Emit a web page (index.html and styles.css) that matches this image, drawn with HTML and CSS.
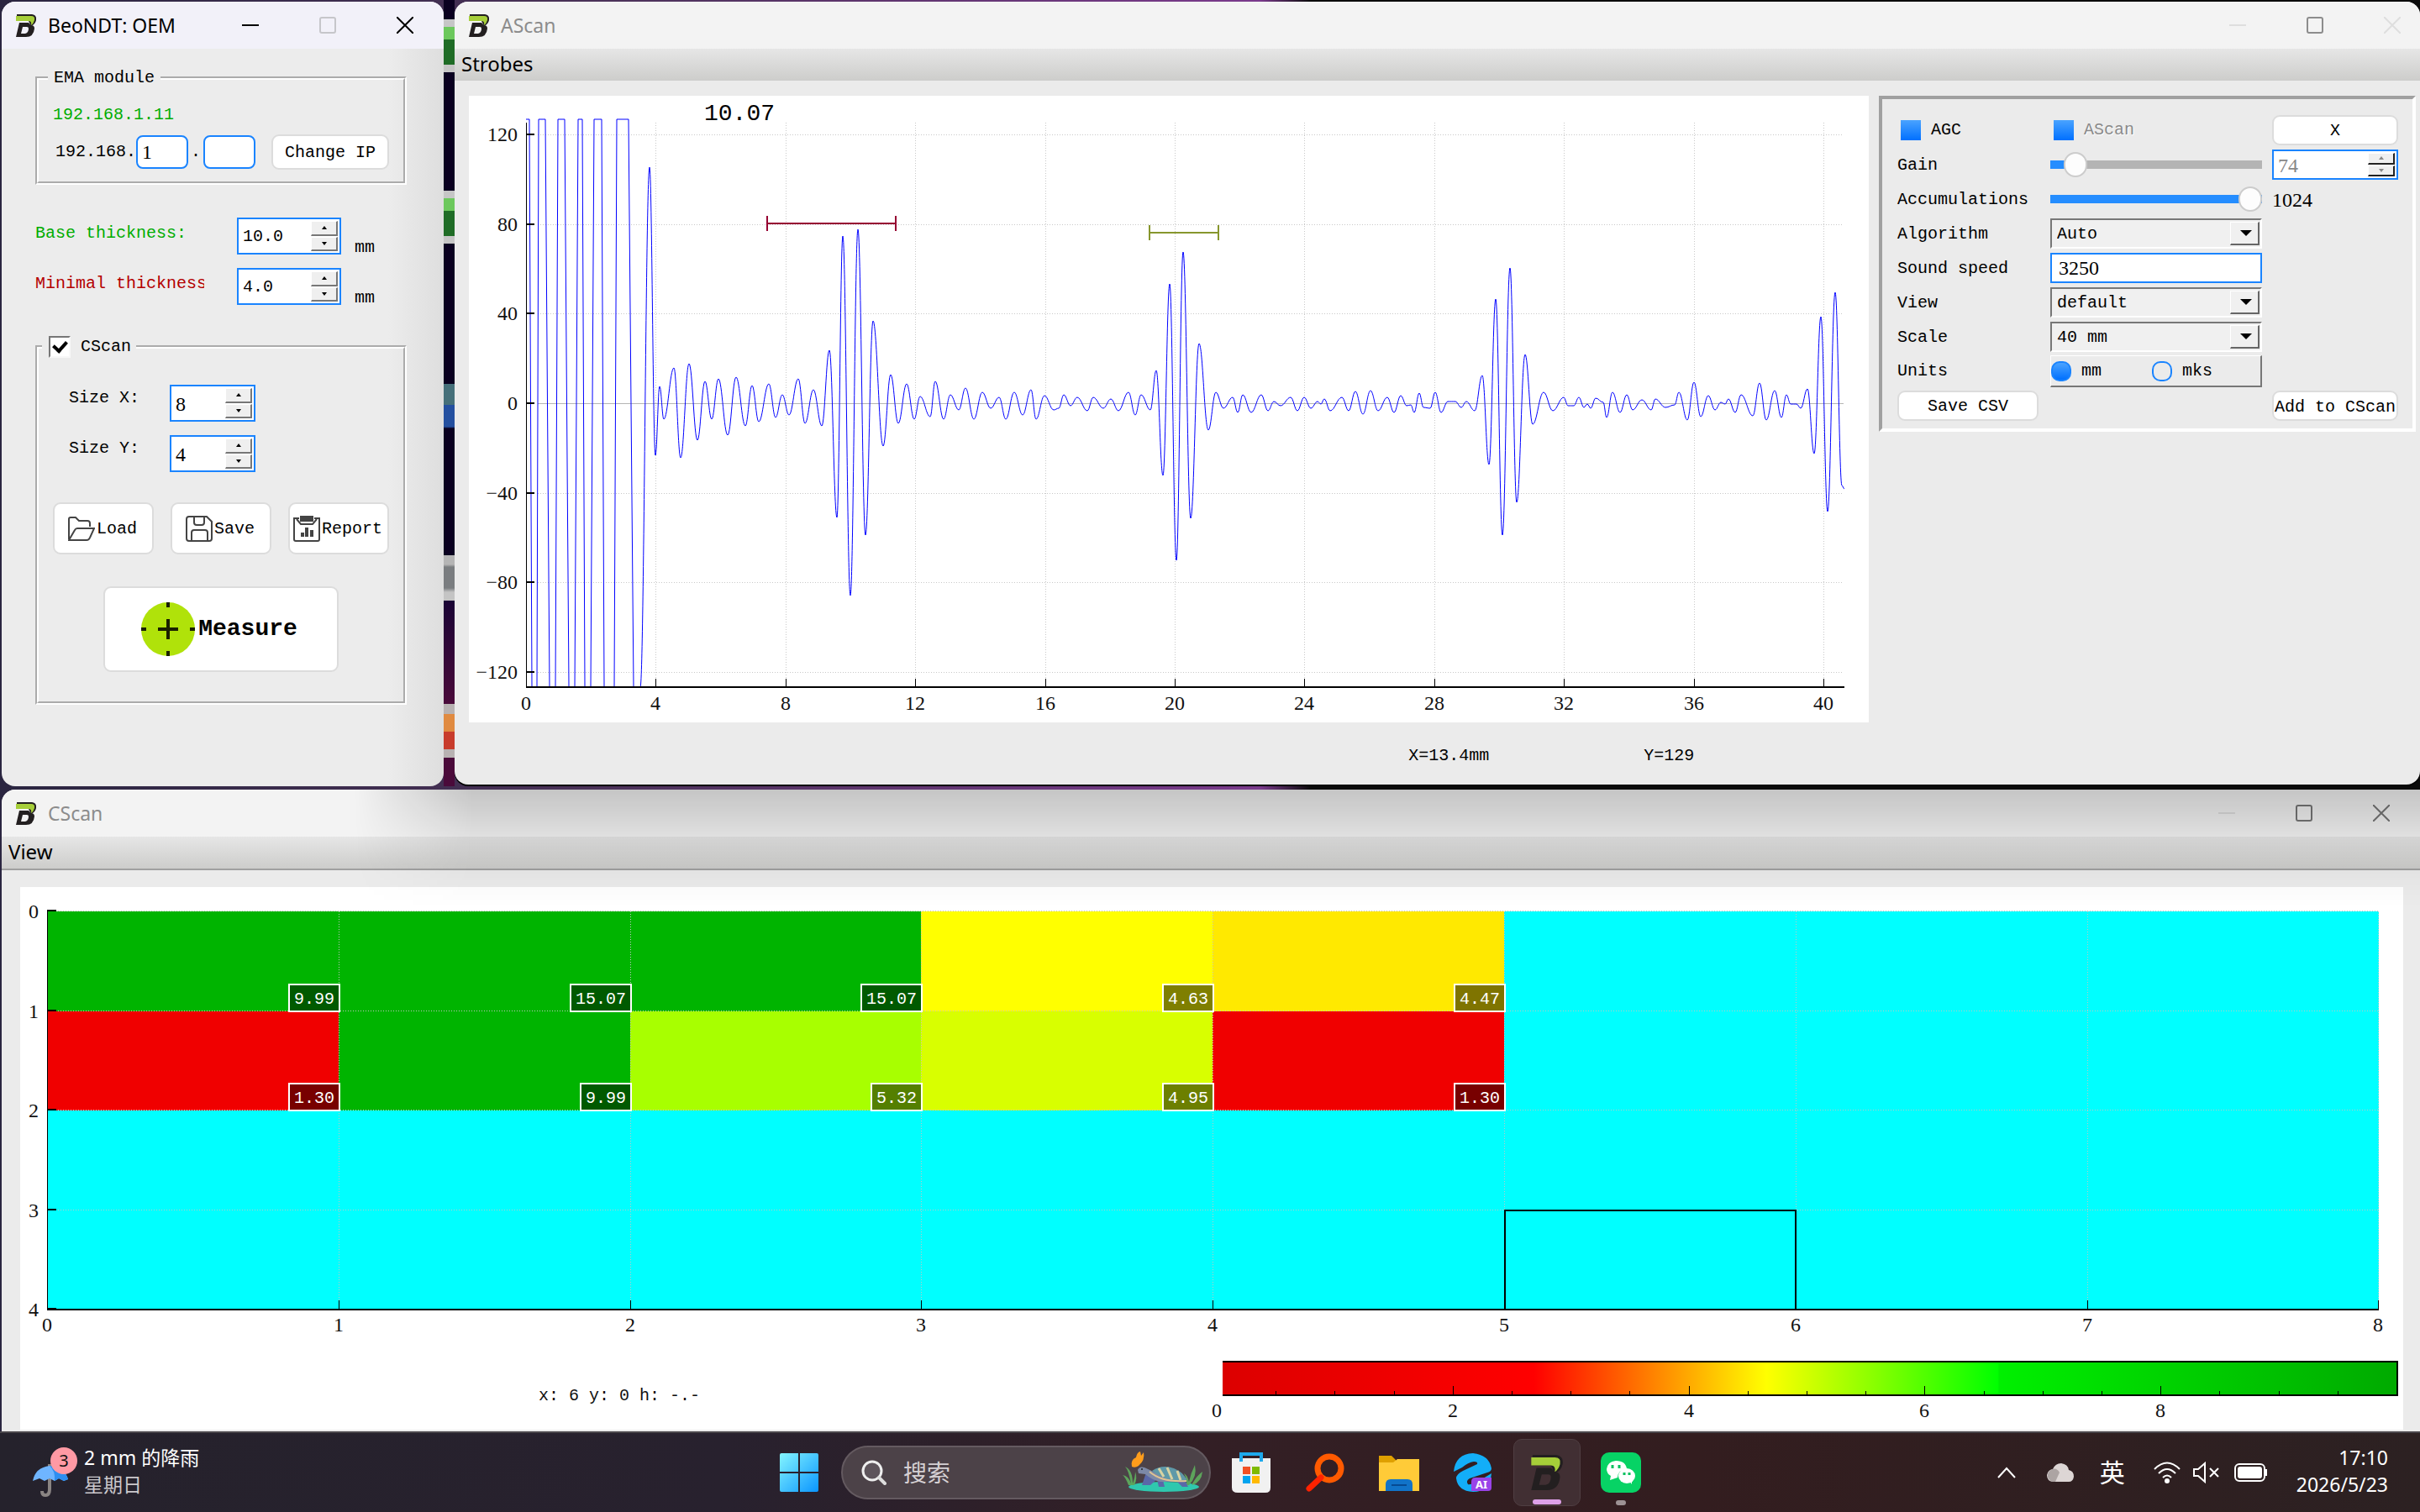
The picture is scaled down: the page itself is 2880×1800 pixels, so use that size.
FILE: index.html
```html
<!DOCTYPE html>
<html lang="zh-CN">
<head>
<meta charset="utf-8">
<title>BeoNDT: OEM</title>
<link rel="stylesheet" href="styles.css">
</head>
<body>
<svg class="defs" aria-hidden="true">
  <symbol id="logo" viewBox="0 0 24 27">
    <path d="M1 0H19Q25 1 24 7Q23 12 18 14L15 8H1Z" fill="#231f20"/>
    <path d="M0 2H18Q23 2 22 7Q21 11 18 13Q19 8 15 8H0Z" fill="#a6ce39"/>
    <path fill-rule="evenodd" d="M4 10H15L18 13Q22 13 22 17Q21 27 12 27H0ZM8 15L6 23H11Q15 22 15 17Q15 15 13 15Z" fill="#231f20"/>
  </symbol>
  <symbol id="min" viewBox="0 0 20 20"><path d="M0 10H20" stroke="currentColor" stroke-width="2"/></symbol>
  <symbol id="max" viewBox="0 0 20 20"><rect x="1" y="1" width="18" height="18" rx="2" fill="none" stroke="currentColor" stroke-width="2"/></symbol>
  <symbol id="close" viewBox="0 0 20 20"><path d="M0 0L20 20M20 0L0 20" stroke="currentColor" stroke-width="2"/></symbol>
</svg>

<div class="desktop">
  <div class="top-row">
    <section class="window oem">
      <header class="titlebar active">
        <svg class="logo"><use href="#logo"/></svg>
        <h1>BeoNDT: OEM</h1>
        <div class="caption">
          <button aria-label="Minimize"><svg><use href="#min"/></svg></button>
          <button class="dim" aria-label="Maximize"><svg><use href="#max"/></svg></button>
          <button aria-label="Close"><svg><use href="#close"/></svg></button>
        </div>
      </header>
      <form class="oem-body">
        <fieldset class="group ema">
          <legend>EMA module</legend>
          <div class="ip-now">192.168.1.11</div>
          <div class="ip-row">
            <label for="ip3">192.168.</label>
            <input id="ip3" class="num" type="text" value="1">
            <label class="dot" for="ip4">.</label>
            <input id="ip4" class="num" type="text" value="">
            <button class="btn" type="button">Change IP</button>
          </div>
        </fieldset>
        <div class="thick-row">
          <label class="green" for="base">Base thickness:</label>
          <span class="spin"><input id="base" type="text" value="10.0"><span class="steps"><button type="button" aria-label="Up" class="up"></button><button type="button" aria-label="Down" class="down"></button></span></span>
          <span class="unit">mm</span>
        </div>
        <div class="thick-row">
          <label class="red" for="minimal">Minimal thickness</label>
          <span class="spin"><input id="minimal" type="text" value="4.0"><span class="steps"><button type="button" aria-label="Up" class="up"></button><button type="button" aria-label="Down" class="down"></button></span></span>
          <span class="unit">mm</span>
        </div>
        <fieldset class="group cgroup">
          <legend><label><input class="tick" type="checkbox" checked>CScan</label></legend>
          <div class="size-row">
            <label for="sx">Size X:</label>
            <span class="spin"><input id="sx" class="num" type="text" value="8"><span class="steps"><button type="button" aria-label="Up" class="up"></button><button type="button" aria-label="Down" class="down"></button></span></span>
          </div>
          <div class="size-row">
            <label for="sy">Size Y:</label>
            <span class="spin"><input id="sy" class="num" type="text" value="4"><span class="steps"><button type="button" aria-label="Up" class="up"></button><button type="button" aria-label="Down" class="down"></button></span></span>
          </div>
          <div class="file-row">
            <button class="btn" type="button">
              <svg viewBox="0 0 32 32"><path d="M1 28V4Q1 2 3 2H9L13 6H23Q26 6 26 9V13M1 29L8 17Q9 15 11 15H31L26 26Q25 29 22 29Z"/></svg>Load</button>
            <button class="btn" type="button">
              <svg viewBox="0 0 32 32"><path d="M4 1H25L31 7V27Q31 30 28 30H4Q1 30 1 27V4Q1 1 4 1ZM10 1V8Q10 11 13 11H19Q22 11 22 8V1M7 30V20Q7 17 10 17H23Q26 17 26 20V30"/></svg>Save</button>
            <button class="btn" type="button">
              <svg viewBox="0 0 32 32"><path d="M7 3H1V28Q1 30 3 30H29Q31 30 31 28V3H25"/><path d="M4 4L9 10H23L28 4" /><path d="M9 0H23V6H9Z" fill="#444"/><path d="M11 25V20M16 25V14M22 25V17" stroke-width="4"/></svg>Report</button>
          </div>
          <button class="btn measure" type="button">
            <svg viewBox="0 0 64 64"><circle cx="32" cy="32" r="32" fill="#b0e20a"/><path d="M32 0V6M32 58V64M0 32H6M58 32H64M32 20V44M20 32H44" stroke="#1a2000" stroke-width="4"/></svg>Measure</button>
        </fieldset>
      </form>
    </section>

    <div class="wallpaper" aria-hidden="true"></div>

    <section class="window ascan">
      <header class="titlebar">
        <svg class="logo"><use href="#logo"/></svg>
        <h2>AScan</h2>
        <div class="caption">
          <button class="dim" aria-label="Minimize"><svg><use href="#min"/></svg></button>
          <button aria-label="Maximize"><svg><use href="#max"/></svg></button>
          <button class="dim" aria-label="Close"><svg><use href="#close"/></svg></button>
        </div>
      </header>
      <nav class="menubar"><button>Strobes</button></nav>
      <div class="ascan-body">
        <div class="ascan-plot">
          <svg class="plot" viewBox="558 114 1666 746">
            <g id="a-grid"></g>
            <path id="wave" fill="none" stroke="#0000ff" stroke-width="1"/>
            <path d="M626.5 146V818" stroke="#000"/>
            <path d="M626 818H2195" stroke="#000" stroke-width="2"/>
            <g id="a-axes"></g>
            <path d="M913 266H1066M913 257V275M1066 257V275" stroke="#960032" stroke-width="2"/>
            <path d="M1368 277H1450M1368 268V286M1450 268V286" stroke="#87962d" stroke-width="2"/>
            <text class="reading" x="838" y="143">10.07</text>
          </svg>
          <div class="readout"><span>X=13.4mm</span><span>Y=129</span></div>
        </div>
        <form class="panel">
          <label><input class="box" type="checkbox" checked>AGC</label>
          <label class="disabled"><input class="box" type="checkbox" checked>AScan</label>
          <button class="btn" type="button">X</button>

          <label for="gain">Gain</label>
          <input id="gain" class="low" type="range" min="0" max="100" value="7">
          <span class="spin off"><input class="num" type="text" value="74" aria-label="Gain value"><span class="steps"><button type="button" aria-label="Up" class="up"></button><button type="button" aria-label="Down" class="down"></button></span></span>

          <label for="acc">Accumulations</label>
          <input id="acc" class="full" type="range" min="0" max="1024" value="1024">
          <output class="num" for="acc">1024</output>

          <label for="alg">Algorithm</label>
          <span class="combo"><select id="alg"><option>Auto</option></select></span>
          <span></span>

          <label for="speed">Sound speed</label>
          <input id="speed" class="line num" type="text" value="3250">
          <span></span>

          <label for="view">View</label>
          <span class="combo"><select id="view"><option>default</option></select></span>
          <span></span>

          <label for="scale">Scale</label>
          <span class="combo"><select id="scale"><option>40 mm</option></select></span>
          <span></span>

          <span>Units</span>
          <div class="units">
            <label><input type="radio" name="units" checked>mm</label>
            <label><input type="radio" name="units">mks</label>
          </div>
          <span></span>

          <button class="btn csv" type="button">Save CSV</button>
          <span></span>
          <button class="btn add" type="button"><span>Add to CScan</span></button>
        </form>
      </div>
    </section>
  </div>

  <section class="window cscan">
    <header class="titlebar">
      <svg class="logo"><use href="#logo"/></svg>
      <h2>CScan</h2>
      <div class="caption">
        <button class="dim" aria-label="Minimize"><svg><use href="#min"/></svg></button>
        <button aria-label="Maximize"><svg><use href="#max"/></svg></button>
        <button aria-label="Close"><svg><use href="#close"/></svg></button>
      </div>
    </header>
    <nav class="menubar"><button>View</button></nav>
    <div class="cscan-body">
      <svg class="plot" viewBox="24 1058 2836 646">
        <defs>
          <linearGradient id="scaleFill">
            <stop offset="0" stop-color="#dc0000"/>
            <stop offset=".265" stop-color="#ff0000"/>
            <stop offset=".463" stop-color="#ffff00"/>
            <stop offset=".66" stop-color="#00ff00"/>
            <stop offset=".661" stop-color="#00f000"/>
            <stop offset="1" stop-color="#00aa00"/>
          </linearGradient>
        </defs>
        <rect x="56" y="1087" width="2775" height="474" fill="#00ffff"/>
        <g id="cells"></g>
        <g id="c-axes"></g>
        <rect x="1791" y="1443" width="346" height="118" fill="none" stroke="#000" stroke-width="2"/>
        <text x="641" y="1669" class="mono">x: 6 y: 0 h: -.-</text>
        <rect x="1455" y="1623" width="1398" height="40" fill="url(#scaleFill)"/>
        <path d="M1455 1623H2853V1663H1455" fill="none" stroke="#000" stroke-width="2"/>
        <g id="bar-axis"></g>
      </svg>
    </div>
  </section>

  <footer class="taskbar">
    <button class="weather">
      <span class="umbrella">
        <svg viewBox="0 0 42 40"><path d="M20 0V30Q20 37 15 37Q11 37 11 32" fill="none" stroke="#8a8583" stroke-width="4"/><path d="M0 20Q3 4 20 2Q38 4 42 18L37 20L31 17L26 20L20 17L14 20L8 17Z" fill="#6fb5ff"/><path d="M20 2Q38 4 42 18L37 20L31 17L26 20Q27 8 20 2Z" fill="#2e8ef0"/></svg>
        <span class="badge">3</span>
      </span>
      <span class="two"><span>2 mm 的降雨</span><span class="soft">星期日</span></span>
    </button>
    <div class="dock">
      <button class="slot" aria-label="Start">
        <svg viewBox="0 0 48 48"><defs><linearGradient id="win" x1="0" y1="0" x2="1" y2="1"><stop offset="0" stop-color="#84f5ff"/><stop offset="1" stop-color="#0a95ff"/></linearGradient></defs><path d="M1 3Q1 1 3 1H23V23H1ZM25 1H45Q47 1 47 3V23H25ZM1 25H23V47H3Q1 47 1 45ZM25 25H47V45Q47 47 45 47H25Z" fill="url(#win)"/></svg>
      </button>
      <button class="search">
        <svg class="lens" viewBox="0 0 30 30"><circle cx="13" cy="13" r="11" fill="#5d545b" stroke="#eee" stroke-width="3"/><path d="M21 21L28 28" stroke="#ddd" stroke-width="4" stroke-linecap="round"/></svg>
        <span>搜索</span>
        <svg class="turtle" viewBox="0 0 98 50"><ellipse cx="50" cy="42" rx="42" ry="6" fill="#2fc8ae"/><path d="M8 40Q4 30 1 28Q8 29 11 38Q8 22 4 18Q13 22 13 38Q16 30 16 24Q19 32 15 40ZM80 40Q90 30 87 16Q82 26 80 36Q78 28 74 26Q78 34 77 40ZM84 40Q95 36 96 24Q90 28 84 38Z" fill="#5da45b"/><path d="M29 25L24 40H34L42 33L44 42H51L48 30ZM62 32L72 42H79L74 32Z" fill="#5a68a8"/><path d="M19 22Q21 17 27 19L44 27L78 32L70 36H46Q36 34 28 27L20 26Z" fill="#7c89a6"/><path d="M36 23Q48 15 62 20Q74 25 77 34Q56 38 36 23Z" fill="#5f99a8"/><path d="M44 20L50 30M54 19L60 33M66 23L70 34" stroke="#d9d3a2" stroke-width="3"/><path d="M33 24Q48 37 77 35" stroke="#e0c391" stroke-width="2" fill="none"/><path d="M12 18Q10 10 17 7Q18 1 22 0L23 5L26 1Q28 10 20 17Q16 20 12 18Z" fill="#ff9d1c"/><circle cx="24" cy="21" r="1" fill="#222"/></svg>
      </button>
      <button class="slot" aria-label="Store">
        <svg viewBox="0 0 48 48"><path d="M1 7H47V42Q47 48 41 48H8Q1 48 1 42Z" fill="#f1f1f1"/><path d="M12 11V2H36V11" fill="none" stroke="#1ea9ec" stroke-width="4"/><path d="M14 17H23V26H14Z" fill="#f25022"/><path d="M25 17H34V26H25Z" fill="#7fba00"/><path d="M14 28H23V37H14Z" fill="#00a4ef"/><path d="M25 28H34V37H25Z" fill="#ffb900"/></svg>
      </button>
      <button class="slot" aria-label="Everything">
        <svg viewBox="0 0 48 48"><circle cx="29" cy="19" r="14" fill="none" stroke="#ff5a00" stroke-width="7"/><path d="M19 30L5 43" stroke="#ff2200" stroke-width="7" stroke-linecap="round"/></svg>
      </button>
      <button class="slot" aria-label="Files">
        <svg viewBox="0 0 48 48"><path d="M0 4H15L20 9V16H0Z" fill="#dfa000"/><path d="M0 12H17L22 8H48V46H0Z" fill="#ffcb38"/><path d="M8 46V38Q8 32 14 32H34Q40 32 40 38V46Z" fill="#1173c8"/><path d="M15 39H33" stroke="#064a92" stroke-width="2"/></svg>
      </button>
      <button class="slot" aria-label="Browser">
        <svg viewBox="0 0 48 48"><path d="M1 23Q3 2 24 1Q43 3 46 19Q46 23 41 24L20 31Q15 34 18 38Q22 40 46 25Q44 47 24 47Q6 46 4 31Q4 26 12 22L29 14Q30 11 25 11Q18 12 11 18Z" fill="#13aef8"/><path d="M22 35Q22 30 27 30H46V42Q46 46 42 46H22Z" fill="#9a43e8"/><text x="27" y="43" class="ai">AI</text></svg>
      </button>
      <button class="slot current" aria-label="BeoNDT"><svg class="app"><use href="#logo"/></svg></button>
      <button class="slot running" aria-label="WeChat">
        <svg viewBox="0 0 48 48"><rect width="48" height="48" rx="10" fill="#07d365"/><path d="M18 10Q30 10 31 20Q20 21 20 30L11 33L12 28Q7 25 7 20Q8 11 18 10Z" fill="#fff"/><ellipse cx="31" cy="28" rx="10" ry="9" fill="#fff"/><path d="M34 34L37 38V32Z" fill="#fff"/><path d="M14 15V19M22 15V19M28 24V27M34 24V27" stroke="#07c160" stroke-width="3"/></svg>
      </button>
    </div>
    <div class="tray">
      <svg class="chev" viewBox="0 0 22 14"><path d="M1 13L11 2L21 13"/></svg>
      <svg class="cloud" viewBox="0 0 32 24"><path d="M7 23Q0 22 0 15Q1 9 7 8Q10 1 17 1Q25 2 26 9Q32 10 32 17Q31 23 26 23Z" fill="#ddd6d5"/><path d="M6 8Q12 6 15 12L10 23H6Q0 20 1 14Q2 10 6 8Z" fill="#aca4a3"/></svg>
      <span class="ime">英</span>
      <svg class="wifi" viewBox="0 0 32 26"><path d="M1 9Q16 -6 31 9M6 14Q16 4 26 14M11 19Q16 14 21 19"/><circle cx="16" cy="23" r="2" fill="#fff"/></svg>
      <svg class="vol" viewBox="0 0 32 26"><path d="M1 9H6L14 2V24L6 17H1ZM20 8L30 18M30 8L20 18"/></svg>
      <svg class="bat" viewBox="0 0 40 22"><rect x="1" y="1" width="35" height="20" rx="5"/><rect x="5" y="5" width="27" height="12" rx="2" fill="#fff"/><path d="M38 7V15"/></svg>
      <div class="two clock"><time>17:10</time><time>2026/5/23</time></div>
    </div>
  </footer>
</div>
<script src="app.js"></script>
</body>
</html>
```
FILE: styles.css
```css
* { box-sizing: border-box; }
:root {
  --mono: "Liberation Mono", "Noto Sans CJK SC", monospace;
  --num: "Liberation Serif", serif;
  --ui: "Noto Sans", "Noto Sans CJK SC", sans-serif;
  --blue: #1a84ff;
}
body { margin: 0; font: 20px/24px var(--mono); color: #000; background: #0a0020; }
button, input, select { font: inherit; color: inherit; margin: 0; padding: 0; border: 0; background: none; border-radius: 0; outline: 0; }
.defs { display: none; }
.desktop {
  min-height: 100vh; display: flex; flex-direction: column; gap: 4px; padding-top: 2px;
  background: linear-gradient(90deg, #2a2540, #4a3258 700px, #7a3a8c 1500px, #0b0b0b 1560px);
}
.top-row { display: grid; grid-template-columns: 526px 13px minmax(0, 1fr); padding-left: 2px; }
.wallpaper {
  margin-top: -2px;
  background: linear-gradient(#0a0020 23px, #c6c6c6 23px 32px, #6cc85c 32px 47px, #1f6c26 47px 77px, #c6c6c6 77px 86px, #0a0020 86px 227px, #c6c6c6 227px 236px, #6cc85c 236px 251px, #1f6c26 251px 281px, #c6c6c6 281px 290px, #0a0020 290px 457px, #46707a 457px 482px, #2450a0 482px 508px, #0a0020 510px 661px, #b5b5b5 661px 672px, #7a7d80 675px 700px, #c4c4c4 705px 715px, #1a0435 715px, #4a0a3a 838px, #b8b2b2 838px 850px, #e08a40 850px 871px, #c83c2c 871px 892px, #b8b2b2 892px 902px, #4a0a3a 902px);
}
.window { display: flex; flex-direction: column; background: #ebebeb; border-radius: 16px; overflow: hidden; position: relative; }
.titlebar { height: 56px; flex: none; display: flex; align-items: center; padding: 0 36px 0 17px; background: #f3f3f3; color: #8c8c8c; font-family: var(--ui); }
.titlebar.active { background: #f2f1f9; color: #000; }
.titlebar h1, .titlebar h2 { font-size: 23px; font-weight: 400; margin: 0; padding-left: 14px; }
.logo { width: 24px; height: 27px; }
.caption { margin-left: auto; display: flex; gap: 72px; }
.caption button { display: flex; }
.caption svg { width: 20px; height: 20px; }
.caption .dim { color: #c6c6ca; }
.menubar { height: 38px; flex: none; display: flex; align-items: center; padding: 0 8px; font: 24px/32px var(--ui); background: linear-gradient(#e6e6e6, #cdcdcb); }
.menubar button { line-height: 36px; padding-bottom: 2px; }

.oem { background: linear-gradient(90deg, #ececec 460px, #dedede); }
.oem-body { padding: 23px 44px 97px 40px; }
.group { margin: 0; min-width: 0; border: 4px groove #fff; padding: 20px 17px 14px; }
.group legend { padding: 0 7px; margin-left: -6px; }
.ip-now, .green { color: #00ac00; }
.red { color: #b40000; }
.ip-row { display: flex; align-items: center; margin: 11px 0 0 3px; }
.ip-row input { width: 62px; height: 40px; border: 2px solid var(--blue); border-radius: 8px; background: #fff; padding-left: 5px; }
.dot { width: 18px; text-align: center; }
.btn { background: #fff; border: 2px solid #dcdcdc; border-radius: 9px; white-space: nowrap; padding-top: 2px; }
.ip-row .btn { width: 140px; height: 42px; margin-left: 19px; }
.num { font-family: var(--num); font-size: 24px; }
.thick-row { display: grid; grid-template-columns: 240px 124px auto; margin-top: 16px; }
.ema + .thick-row { margin-top: 39px; }
.thick-row label { width: 201px; line-height: 38px; overflow: hidden; white-space: nowrap; }
.unit { align-self: end; line-height: 16px; padding-left: 16px; }
.spin { display: flex; height: 44px; border: 2px solid var(--blue); background: #fff; padding: 2px; }
.spin input { flex: 1; min-width: 0; padding: 2px 0 0 3px; }
.steps { width: 32px; display: grid; grid-template-rows: 1fr 1fr; gap: 1px; }
.steps button { background: #efefef; border: 1px solid #fff; border-right: 2px solid #777; border-bottom: 2px solid #777; display: grid; place-items: center; }
.steps button::after { content: ""; border: 3px solid transparent; }
.steps .up::after { border-top: 0; border-bottom: 4px solid #000; }
.steps .down::after { border-bottom: 0; border-top: 4px solid #000; }
.cgroup { margin-top: 37px; padding: 32px 17px 35px; }
.cgroup legend { height: 26px; margin-left: -13px; padding: 0 6px 0 8px; }
.cgroup legend label { display: flex; align-items: center; gap: 12px; }
.tick { appearance: none; width: 26px; height: 26px; background: #fff; border: 2px solid #777; border-right-color: #f8f8f8; border-bottom-color: #f8f8f8; display: grid; place-items: center; }
.tick:checked::after { content: ""; width: 7px; height: 12px; border: solid #000; border-width: 0 4px 4px 0; transform: rotate(42deg); margin-top: -4px; }
.size-row { display: grid; grid-template-columns: 120px 102px; margin-left: 19px; }
.size-row + .size-row { margin-top: 16px; }
.size-row label { line-height: 32px; }
.file-row { display: grid; grid-template-columns: repeat(3, 1fr); gap: 20px; margin-top: 36px; }
.file-row .btn { height: 62px; display: flex; align-items: center; justify-content: center; gap: 2px; padding-right: 2px; }
.file-row svg { width: 32px; height: 32px; fill: none; stroke: #444; stroke-width: 2; }
.measure { width: 280px; height: 102px; margin: 38px auto 0; display: flex; align-items: center; justify-content: center; gap: 4px; font-size: 28px; font-weight: 700; padding: 0 4px 0 0; }
.measure svg { width: 64px; height: 64px; }

.ascan { box-shadow: 0 2px #000; margin-bottom: 2px; }
.ascan .titlebar { padding-right: 23px; }
.ascan .dim, .cscan .dim { color: #dedede; }
.ascan-body { display: grid; grid-template-columns: minmax(0, 1fr) 639px; gap: 12px; padding: 18px 5px 0 17px; align-items: start; }
.plot { display: block; width: 100%; height: auto; background: #fff; }
.plot text { font: 24px var(--num); fill: #111; }
.plot .reading { font: 28px var(--mono); fill: #000; }
.plot .mono, .plot .tag { font: 20px var(--mono); }
.plot .tag { fill: #fff; text-anchor: end; }
.readout { margin: 28px 0 0 67%; display: grid; grid-template-columns: 280px auto; padding-left: 2px; }
.panel {
  border: 4px solid #a0a0a0; border-right-color: #fff; border-bottom-color: #fff;
  display: grid; grid-template-columns: 182px 252px 150px; grid-auto-rows: 36px; row-gap: 5px; align-items: center;
  padding: 19px 0 11px 18px; height: 400px;
}
.panel > :nth-child(3n) { margin-left: 12px; width: 150px; }
.panel > label, .units label { display: flex; align-items: center; gap: 12px; }
.panel > label[for], .panel > output { padding-top: 2px; }
.panel .btn { height: 36px; }
.disabled { color: #8a8a8a; text-shadow: 1px 1px #fff; }
.box { appearance: none; width: 24px; height: 24px; background: linear-gradient(#4aa3ff, #0070ff); margin-left: 4px; }
.panel .spin { height: 36px; }
.off input { color: #888; }
.off .steps button { border-right-color: #222; border-bottom-color: #222; }
.off .steps .up::after { border-bottom-color: #888; }
.off .steps .down::after { border-top-color: #888; }
input[type="range"] { appearance: none; width: 252px; height: 30px; }
input.low { background: linear-gradient(90deg, #258dff 24px, #b4b4b4 24px) center / 100% 10px no-repeat; }
input.full { background: linear-gradient(#258dff, #258dff) center / 100% 10px no-repeat; }
input[type="range"]::-webkit-slider-thumb { appearance: none; width: 28px; height: 30px; border: 2px solid #ccc; border-radius: 14px; background: #fdfdfd; }
.combo { position: relative; height: 36px; border: 2px solid #777; border-right-color: #fff; border-bottom-color: #fff; background: #f0f0f0; display: flex; }
.combo select { appearance: none; flex: 1; padding: 2px 0 0 6px; }
.combo::after {
  content: ""; position: absolute; right: 1px; top: 2px; bottom: 2px; width: 32px; pointer-events: none;
  border: 1px solid #fff; border-right: 2px solid #666; border-bottom: 2px solid #666; background: #f0f0f0;
}
.combo::before { content: ""; position: absolute; z-index: 1; right: 10px; top: 12px; border: 7px solid transparent; border-top-color: #000; border-bottom: 0; pointer-events: none; }
.line { height: 36px; border: 2px solid var(--blue); background: #fff; padding-left: 8px; min-width: 0; }
.units { height: 38px; border: 1px solid #fff; border-right: 2px solid #777; border-bottom: 2px solid #777; display: grid; grid-template-columns: 120px 120px; }
.units input { appearance: none; width: 24px; height: 24px; border-radius: 10px; border: 2px solid var(--blue); }
.units input:checked { background: linear-gradient(#4aa3ff, #0070ff); }
.csv { width: 168px; }
.add { overflow: hidden; display: flex; justify-content: center; }
.add span { flex: none; line-height: 32px; }

.cscan { margin-left: 2px; flex: 1; border-radius: 16px 0 0 0; }
.cscan .caption { color: #777; }
.cscan::after {
  content: ""; position: absolute; inset: 0 0 auto; height: 140px; pointer-events: none;
  background: linear-gradient(rgba(0, 0, 0, .19), rgba(0, 0, 0, .08) 56px, rgba(0, 0, 0, .02) 110px, transparent);
  mask-image: linear-gradient(90deg, transparent 420px, #000 560px);
}
.cscan-body { flex: 1; border-top: 2px solid #a0a0a0; padding: 20px 20px 0 22px; }

.taskbar {
  height: 96px; flex: none; margin-top: -4px; border-top: 2px solid #4a464b; color: #fff; font: 23px/32px var(--ui);
  display: grid; grid-template-columns: 1fr auto 1fr; align-items: center;
  background: linear-gradient(90deg, #25222c, #28212e 30%, #331f25 50%, #331d1f 70%, #2c2122);
}
.weather { display: flex; align-items: center; gap: 18px; padding-left: 39px; text-align: left; justify-self: start; }
.umbrella { position: relative; width: 43px; height: 60px; display: flex; align-items: end; }
.umbrella svg { width: 42px; height: 40px; }
.badge { position: absolute; left: 21px; top: 0; width: 32px; height: 32px; border-radius: 50%; background: #ff99a4; color: #111; font-size: 20px; line-height: 32px; text-align: center; }
.two { display: flex; flex-direction: column; padding-bottom: 4px; }
.soft { color: #cbc8cc; }
.dock { display: flex; align-items: center; gap: 8px; }
.slot { position: relative; width: 80px; height: 80px; display: grid; place-items: center; border-radius: 10px; }
.slot svg { width: 48px; height: 48px; }
.slot .app { width: 38px; height: 42px; }
.ai { font: 700 13px var(--ui); fill: #fff; }
.current { background: #412f33; border: 1px solid #4f3e42; }
.current::after, .running::after { content: ""; position: absolute; bottom: 1px; width: 34px; height: 6px; border-radius: 3px; background: #dda0e8; }
.running::after { width: 12px; background: #9d9294; }
.search { width: 440px; height: 64px; border-radius: 32px; background: #4c4248; border: 2px solid #645a60; display: flex; align-items: center; padding: 0 6px 0 22px; margin-left: 2px; color: #d5d0d3; font-size: 28px; }
.search .lens { width: 30px; height: 30px; margin-right: 20px; }
.search .turtle { width: 98px; height: 50px; margin-left: auto; }
.tray { justify-self: end; display: flex; align-items: center; padding-right: 38px; }
.tray svg { fill: none; stroke: #fff; stroke-width: 2; }
.tray .chev { width: 22px; height: 14px; margin-right: 37px; }
.tray .cloud { width: 32px; height: 24px; margin-right: 31px; stroke: none; }
.ime { font-size: 30px; margin-right: 34px; }
.tray .wifi { width: 32px; height: 26px; margin-right: 15px; }
.tray .vol { width: 32px; height: 26px; margin-right: 17px; }
.tray .bat { width: 40px; height: 22px; margin-right: 34px; }
.clock { text-align: right; }
```
FILE: app.js
```js
const NS = "http://www.w3.org/2000/svg";
function add(id, name, attrs, text) {
  const el = document.createElementNS(NS, name);
  for (const key in attrs) el.setAttribute(key, attrs[key]);
  if (text !== undefined) el.textContent = text;
  document.getElementById(id).append(el);
}
function line(id, d, stroke, dash, width) {
  add(id, "path", { d, stroke, "stroke-width": width || 1, "stroke-dasharray": dash || "none" });
}

/* A-scan grid and axes */
for (let v = -120; v <= 120; v += 40) {
  const y = Math.round(480 - v * 2.665);
  line("a-grid", `M640 ${y}.5H2194`, v ? "#c8c8c8" : "#b4b4b4", v ? "1 2" : "");
  line("a-axes", `M626 ${y}H636`, "#000", "", 2);
  add("a-axes", "text", { x: 616, y: y + 8, "text-anchor": "end" }, String(v).replace("-", "−"));
}
for (let v = 0; v <= 40; v += 4) {
  const x = Math.round(626 + v * 38.6);
  if (v) {
    line("a-grid", `M${x}.5 146V808`, "#c8c8c8", "1 2");
    line("a-axes", `M${x}.5 808V818`, "#000", "", 1);
  }
  add("a-axes", "text", { x, y: 845, "text-anchor": "middle" }, v);
}

/* Echo signal: clipped start pulse, then the extrema of each half wave */
const pulse = "M626 142H630L633 818H639L641 142H649L654 818H661L664 142H672L677 818H684L688 142H693L696 818H703L707 142H716L719 818H731L734 142H748L754 818H762";
const extrema = [
  773,199, 780,542, 785,460, 790,499, 802,438, 810,545, 820,433, 830,524, 839,454, 847,499, 855,451, 866,518,
  876,449, 887,507, 895,459, 903,502, 915,457, 923,497, 931,470, 939,494, 950,451, 958,504, 968,464, 978,507,
  987,417, 996,616, 1003,281, 1012,709, 1021,273, 1030,637, 1039,382, 1051,531, 1060,446, 1069,504, 1079,457,
  1088,499, 1095,472, 1107,496, 1113,454, 1123,499, 1131,470, 1141,488, 1149,462, 1159,499, 1169,467, 1179,486,
  1189,473, 1197,499, 1207,467, 1217,494, 1227,464, 1233,499, 1243,471, 1254,488, 1260,486, 1266,470, 1274,483,
  1282,473, 1294,489, 1301,473, 1313,486, 1322,475, 1331,489, 1343,467, 1351,494, 1358,470, 1369,488, 1376,441,
  1384,566, 1392,338, 1400,667, 1408,300, 1417,617, 1427,409, 1438,512, 1447,467, 1456,486, 1467,473, 1473,491,
  1479,470, 1489,491, 1501,470, 1509,489, 1516,478, 1524,483, 1536,473, 1544,489, 1552,473, 1560,486, 1568,478,
  1572,481, 1576,475, 1583,489, 1597,473, 1605,489, 1613,466, 1622,493, 1631,465, 1640,489, 1651,473, 1659,491,
  1667,471, 1674,483, 1679,482, 1683,491, 1689,468, 1694,485, 1702,486, 1708,467, 1715,491, 1723,478, 1732,478,
  1739,485, 1745,478, 1755,489, 1764,447, 1772,553, 1780,356, 1788,637, 1797,319, 1805,598, 1815,422, 1824,505,
  1837,467, 1848,489, 1861,473, 1866,483, 1873,483, 1879,473, 1885,485, 1889,481, 1893,486, 1899,474, 1908,479,
  1912,497, 1919,467, 1928,491, 1936,470, 1943,488, 1954,476, 1965,488, 1970,475, 1982,485, 1993,482, 1998,467,
  2008,500, 2016,455, 2024,496, 2033,471, 2041,488, 2048,479, 2053,481, 2057,475, 2065,491, 2072,470, 2086,495,
  2094,456, 2102,500, 2112,465, 2120,497, 2126,470, 2131,481, 2138,481, 2143,486, 2151,463, 2159,540, 2167,377,
  2175,609, 2184,348, 2192,578, 2195,582
];
let wave = pulse, px = 762, py = 818;
for (let i = 0; i < extrema.length; i += 2) {
  const x = extrema[i], y = extrema[i + 1], h = (x - px) * 0.4;
  wave += `C${px + h} ${py} ${x - h} ${y} ${x} ${y}`;
  px = x; py = y;
}
document.getElementById("wave").setAttribute("d", wave);

/* C-scan thickness map */
const colX = [56, 403, 750, 1096, 1443, 1790, 2137, 2484, 2830];
const rowY = [1087, 1206, 1324, 1443, 1561];
const cells = [
  [["9.99", "#00b400"], ["15.07", "#00b400"], ["15.07", "#00b400"], ["4.63", "#ffff00"], ["4.47", "#ffe900"]],
  [["1.30", "#f00000"], ["9.99", "#00b400"], ["5.32", "#a8ff00"], ["4.95", "#d8ff00"], ["1.30", "#f00000"]]
];
cells.forEach((row, r) => row.forEach(([, fill], c) =>
  add("cells", "rect", { x: colX[c], y: rowY[r], width: colX[c + 1] - colX[c], height: rowY[r + 1] - rowY[r], fill })));
rowY.slice(0, 4).forEach(y => line("cells", `M66 ${y - 1}.5H2830`, "#c4c4c4", "1 2"));
colX.slice(1).forEach(x => line("cells", `M${x}.5 1087V1550`, "#c4c4c4", "1 2"));
cells.forEach((row, r) => row.forEach(([value], c) => {
  const w = value.length * 12 + 12, x = colX[c + 1], y = rowY[r + 1];
  add("cells", "rect", { x: x - w + 1, y: y - 32, width: w, height: 32, fill: "rgba(0,0,0,.5)", stroke: "#fff", "stroke-width": 2 });
  add("cells", "text", { class: "tag", x: x - 5, y: y - 9 }, value);
}));
line("c-axes", "M56.5 1086V1561", "#000", "", 1);
line("c-axes", "M56 1561H2831", "#000", "", 2);
rowY.forEach((y, i) => {
  line("c-axes", `M56 ${y - 1}H67`, "#000", "", 2);
  add("c-axes", "text", { x: 46, y: y + 8, "text-anchor": "end" }, i);
});
colX.forEach((x, i) => {
  if (i) line("c-axes", `M${x}.5 1550V1561`, "#000", "", 1);
  add("c-axes", "text", { x, y: 1587, "text-anchor": "middle" }, i);
});

/* Colour bar scale */
for (let i = 0; i <= 19; i++) {
  const x = Math.round(1448 + i * 70.2);
  if (i) line("bar-axis", `M${x}.5 ${i % 4 ? 1658 : 1652}V1663`, "#000", "", 1);
  if (i % 4 === 0) add("bar-axis", "text", { x, y: 1689, "text-anchor": "middle" }, i / 2);
}
```
